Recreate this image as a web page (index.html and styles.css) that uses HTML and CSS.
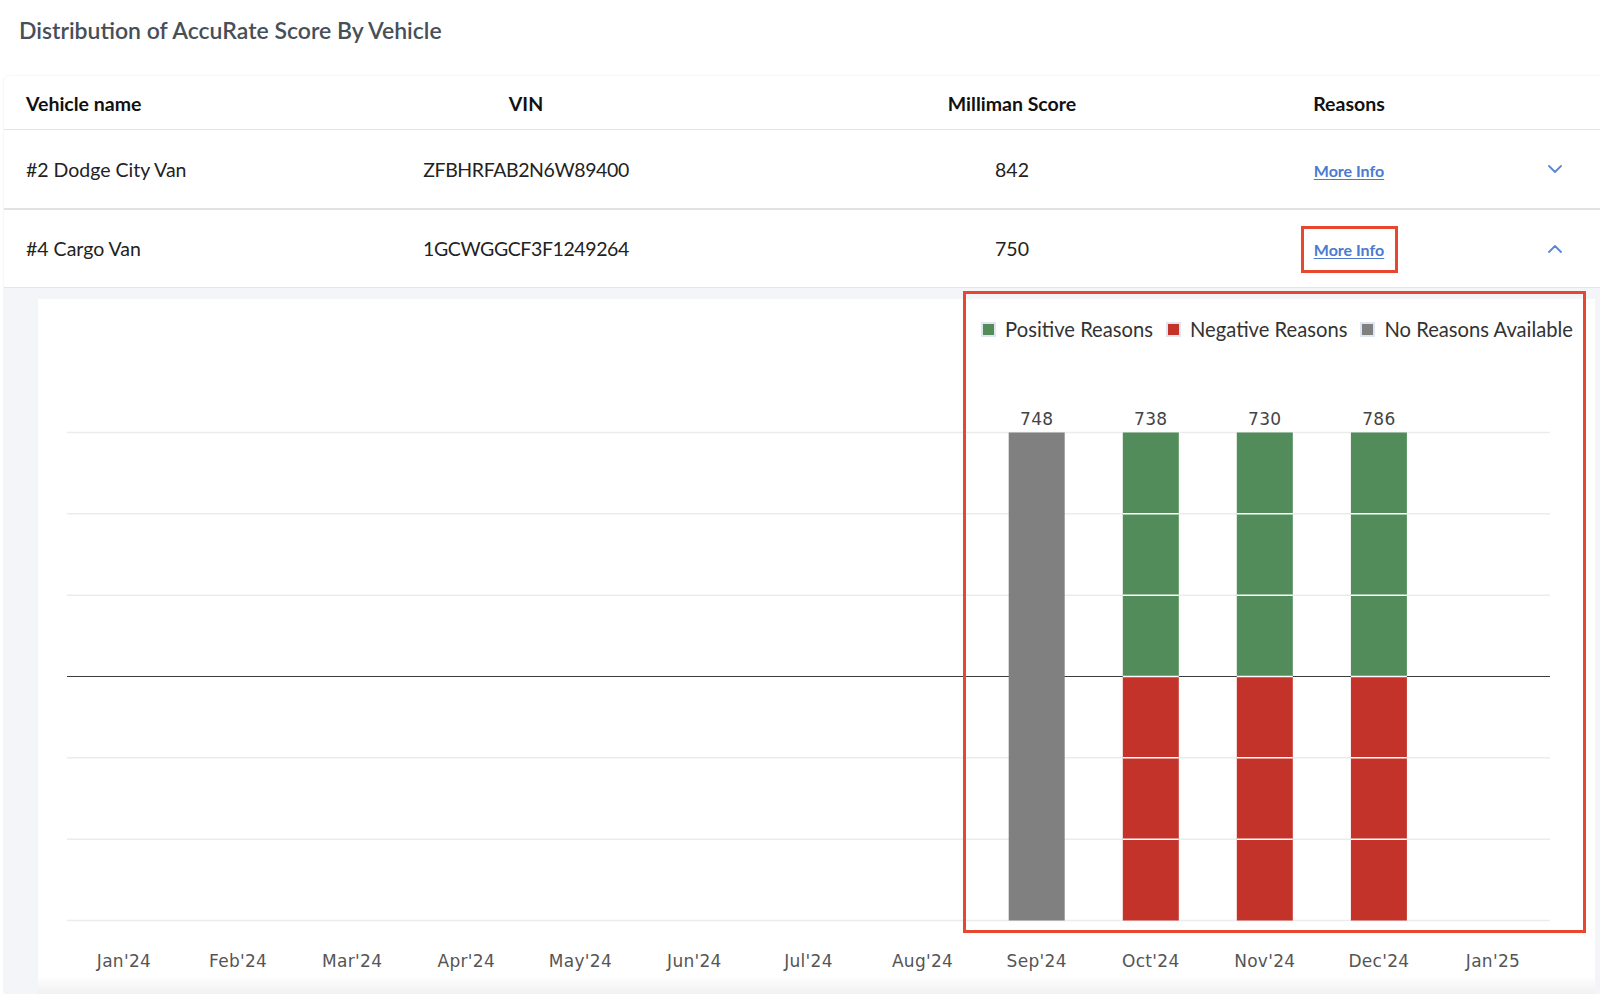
FILE: index.html
```html
<!DOCTYPE html>
<html lang="en">
<head>
<meta charset="utf-8">
<title>Distribution of AccuRate Score By Vehicle</title>
<link rel="stylesheet" href="styles.css">
</head>
<body>
<div class="page">
  <h2 class="title">Distribution of AccuRate Score By Vehicle</h2>
  <div class="card">
    <div class="row head">
      <div class="cell name">Vehicle name</div>
      <div class="cell center">VIN</div>
      <div class="cell center">Milliman Score</div>
      <div class="cell center">Reasons</div>
      <div class="cell"></div>
    </div>
    <div class="row body first">
      <div class="cell name">#2 Dodge City Van</div>
      <div class="cell center vin">ZFBHRFAB2N6W89400</div>
      <div class="cell center">842</div>
      <div class="cell center"><a class="more" href="#">More Info</a></div>
      <div class="cell chev"><svg width="14" height="8" viewBox="0 0 14 8"><polyline points="1,1 7,7 13,1" fill="none" stroke="#5a86d6" stroke-width="1.8" stroke-linecap="round" stroke-linejoin="round"/></svg></div>
    </div>
    <div class="row body second">
      <div class="cell name">#4 Cargo Van</div>
      <div class="cell center vin">1GCWGGCF3F1249264</div>
      <div class="cell center">750</div>
      <div class="cell center"><a class="more" href="#">More Info</a></div>
      <div class="cell chev"><svg width="14" height="8" viewBox="0 0 14 8"><polyline points="1,7 7,1 13,7" fill="none" stroke="#5a86d6" stroke-width="1.8" stroke-linecap="round" stroke-linejoin="round"/></svg></div>
    </div>
    <div class="expand">
      <div class="chart-panel">
        <div class="legend">
          <span class="item"><span class="swatch pos"></span>Positive Reasons</span>
          <span class="item"><span class="swatch neg"></span>Negative Reasons</span>
          <span class="item"><span class="swatch none"></span>No Reasons Available</span>
        </div>
        <svg class="chart" width="1557" height="640" viewBox="0 0 1557 640">
          <g stroke="#ececec" stroke-width="1.5">
            <line x1="29" y1="83.5" x2="1512" y2="83.5"/>
            <line x1="29" y1="164.8" x2="1512" y2="164.8"/>
            <line x1="29" y1="246.2" x2="1512" y2="246.2"/>
            <line x1="29" y1="408.8" x2="1512" y2="408.8"/>
            <line x1="29" y1="490.2" x2="1512" y2="490.2"/>
            <line x1="29" y1="571.5" x2="1512" y2="571.5"/>
          </g>
          <line x1="29" y1="327.5" x2="1512" y2="327.5" stroke="#3c3c3c" stroke-width="1.2"/>
          <rect x="970.7" y="83.5" width="56" height="488" fill="#808080"/>
          <g>
            <rect x="1084.8" y="83.5" width="56" height="244" fill="#518c5a"/>
            <rect x="1084.8" y="327.5" width="56" height="244" fill="#c4332a"/>
            <rect x="1198.8" y="83.5" width="56" height="244" fill="#518c5a"/>
            <rect x="1198.8" y="327.5" width="56" height="244" fill="#c4332a"/>
            <rect x="1312.9" y="83.5" width="56" height="244" fill="#518c5a"/>
            <rect x="1312.9" y="327.5" width="56" height="244" fill="#c4332a"/>
          </g>
          <g stroke="#ffffff" stroke-width="1.6">
            <line x1="1084.8" y1="164.8" x2="1140.8" y2="164.8"/>
            <line x1="1084.8" y1="246.2" x2="1140.8" y2="246.2"/>
            <line x1="1084.8" y1="327.5" x2="1140.8" y2="327.5"/>
            <line x1="1084.8" y1="408.8" x2="1140.8" y2="408.8"/>
            <line x1="1084.8" y1="490.2" x2="1140.8" y2="490.2"/>
            <line x1="1198.8" y1="164.8" x2="1254.8" y2="164.8"/>
            <line x1="1198.8" y1="246.2" x2="1254.8" y2="246.2"/>
            <line x1="1198.8" y1="327.5" x2="1254.8" y2="327.5"/>
            <line x1="1198.8" y1="408.8" x2="1254.8" y2="408.8"/>
            <line x1="1198.8" y1="490.2" x2="1254.8" y2="490.2"/>
            <line x1="1312.9" y1="164.8" x2="1368.9" y2="164.8"/>
            <line x1="1312.9" y1="246.2" x2="1368.9" y2="246.2"/>
            <line x1="1312.9" y1="327.5" x2="1368.9" y2="327.5"/>
            <line x1="1312.9" y1="408.8" x2="1368.9" y2="408.8"/>
            <line x1="1312.9" y1="490.2" x2="1368.9" y2="490.2"/>
          </g>
          <g class="val" text-anchor="middle">
            <text x="998.7" y="76">748</text>
            <text x="1112.8" y="76">738</text>
            <text x="1226.8" y="76">730</text>
            <text x="1340.9" y="76">786</text>
          </g>
          <g class="month" text-anchor="middle">
            <text x="86" y="618">Jan'24</text>
            <text x="200.1" y="618">Feb'24</text>
            <text x="314.2" y="618">Mar'24</text>
            <text x="428.3" y="618">Apr'24</text>
            <text x="542.4" y="618">May'24</text>
            <text x="656.4" y="618">Jun'24</text>
            <text x="770.5" y="618">Jul'24</text>
            <text x="884.6" y="618">Aug'24</text>
            <text x="998.7" y="618">Sep'24</text>
            <text x="1112.8" y="618">Oct'24</text>
            <text x="1226.8" y="618">Nov'24</text>
            <text x="1340.9" y="618">Dec'24</text>
            <text x="1455" y="618">Jan'25</text>
          </g>
        </svg>
      </div>
    </div>
  </div>
  <div class="annot annot-link"></div>
  <div class="annot annot-chart"></div>
</div>
</body>
</html>
```

FILE: styles.css
```css
html, body {
  margin: 0;
  padding: 0;
  width: 1600px;
  height: 994px;
  overflow: hidden;
  background: #ffffff;
  font-family: Lato, "Noto Sans", sans-serif;
}

.page {
  position: relative;
  height: 994px;
}

.title {
  margin: 0;
  padding: 16px 0 0 19px;
  height: 60px;
  box-sizing: border-box;
  font-size: 23px;
  line-height: 28px;
  font-weight: 600;
  color: #474f58;
}

.card {
  margin-left: 4px;
  background: #ffffff;
  border-radius: 6px 0 0 0;
  box-shadow: 0 0 3px rgba(0, 0, 0, 0.08);
}

.title + .card {
  margin-top: 16px;
}

.row {
  display: grid;
  grid-template-columns: 330px 384px 588px 86px 1fr;
  align-items: center;
  color: #222;
}

.cell.name {
  padding-left: 22px;
}

.cell.center {
  text-align: center;
}

.cell.vin {
  letter-spacing: -0.4px;
}

.cell.chev {
  justify-self: end;
  padding-right: 38px;
  display: flex;
  align-items: center;
}

.head {
  height: 54px;
  padding-top: 2px;
  box-sizing: border-box;
  border-bottom: 1px solid #e3e3e3;
  font-size: 19.5px;
  font-weight: 700;
  color: #111;
}

.body {
  font-size: 19.5px;
}

.body.first {
  height: 78px;
  border-bottom: 2px solid #e2e2e2;
}

.body.second {
  height: 77px;
  border-bottom: 1px solid #e4e4e4;
}

.more {
  color: #4a7bd0;
  font-size: 16px;
  font-weight: 700;
  text-decoration: underline;
  text-underline-offset: 2px;
}

.expand {
  background: #f4f5f9;
  padding: 11px 5px 0 34px;
}

.chart-panel {
  height: 695px;
  background: linear-gradient(to bottom, #ffffff 0, #ffffff calc(100% - 18px), #f1f1f3 100%);
}

.legend {
  display: flex;
  justify-content: flex-end;
  gap: 13px;
  padding: 18px 22px 8px 0;
  font-size: 20.2px;
  line-height: 24px;
  color: #333;
}

.item {
  display: flex;
  align-items: center;
}

.swatch {
  width: 11px;
  height: 11px;
  border: 2px solid #dfe6f2;
  margin-right: 9px;
}

.swatch.pos { background: #518c5a; }
.swatch.neg { background: #c4332a; }
.swatch.none { background: #808080; }

.chart {
  display: block;
}

.chart text {
  font-family: "DejaVu Sans", Verdana, sans-serif;
  font-size: 17px;
  letter-spacing: 0.3px;
}

.chart .val text {
  fill: #444;
}

.chart .month text {
  fill: #555;
}

.annot {
  position: absolute;
  box-sizing: border-box;
  border: 3px solid #e8472f;
}

.annot-link {
  left: 1301px;
  top: 226px;
  width: 97px;
  height: 47px;
}

.annot-chart {
  left: 963px;
  top: 291px;
  width: 623px;
  height: 642px;
}
```
